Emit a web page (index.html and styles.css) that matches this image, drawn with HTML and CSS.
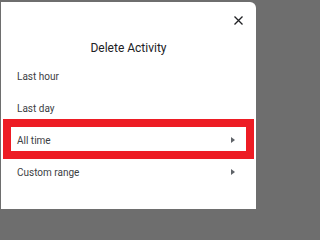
FILE: index.html
```html
<!DOCTYPE html>
<html>
<head>
<meta charset="utf-8">
<link rel="stylesheet" href="styles.css">
</head>
<body>
<div class="dialog">
  <div class="top">
    <svg class="close" width="9" height="9" viewBox="0 0 9 9"><path d="M0.5 0.5 L8.5 8.5 M8.5 0.5 L0.5 8.5" stroke="#202124" stroke-width="1.3" fill="none"/></svg>
  </div>
  <div class="title">Delete Activity</div>
  <div class="items">
    <div class="item">Last hour</div>
    <div class="item">Last day</div>
    <div class="item arrow highlight">All time<span class="tri"></span></div>
    <div class="item arrow">Custom range<span class="tri"></span></div>
  </div>
</div>
</body>
</html>
```
FILE: styles.css
```css
html, body { margin: 0; padding: 0; }
html { background: #6e6e6e; }
body {
  background: #6e6e6e;
  width: 260px;
  height: 209px;
  overflow: hidden;
  font-family: Roboto, "Noto Sans", sans-serif;
  padding-top: 2px;
  box-sizing: border-box;
}
.dialog {
  margin: 0 4px 0 1px;
  height: 207px;
  background: #fff;
  border-top-right-radius: 6px;
}
.top {
  display: flex;
  justify-content: flex-end;
  padding: 14px 13px 0 0;
}
.close { display: block; }
.title {
  margin-top: 16px;
  text-align: center;
  font-size: 12px;
  line-height: 14px;
  color: #202124;
}
.items { margin-top: 5px; }
.item {
  height: 32px;
  display: flex;
  align-items: center;
  justify-content: space-between;
  padding: 0 21px 0 16px;
  font-size: 10px;
  color: #3c4043;
  position: relative;
}
.tri {
  width: 0; height: 0;
  border-left: 4px solid #5f6368;
  border-top: 3px solid transparent;
  border-bottom: 3px solid transparent;
}
.highlight::after {
  content: "";
  position: absolute;
  top: -5px; bottom: -3px; left: 2px; right: 2px;
  border: 8px solid #ed1c24;
}
```
